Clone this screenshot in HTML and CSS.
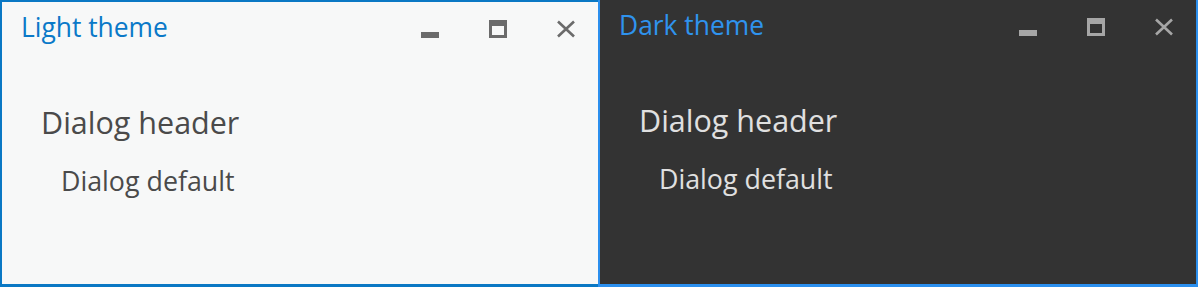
FILE: index.html
```html
<!DOCTYPE html>
<html>
<head>
<meta charset="utf-8">
<link rel="stylesheet" href="styles.css">
</head>
<body>
<div class="stage">
  <section class="panel light">
    <div class="titlebar">
      <div class="title">Light theme</div>
      <div class="controls">
        <svg class="ic ic-min" width="18" height="18" viewBox="0 0 18 18"><rect x="0" y="12" width="18" height="6"/></svg>
        <svg class="ic ic-max" width="18" height="18" viewBox="0 0 18 18"><path fill-rule="evenodd" d="M0 0H18V18H0Z M3 6V15H15V6Z"/></svg>
        <svg class="ic ic-close" width="20" height="18" viewBox="0 0 20 18"><path d="M2 1.5L18 16.5M18 1.5L2 16.5"/></svg>
      </div>
    </div>
    <div class="content">
      <div class="header">Dialog header</div>
      <div class="default">Dialog default</div>
    </div>
  </section>
  <section class="panel dark">
    <div class="titlebar">
      <div class="title">Dark theme</div>
      <div class="controls">
        <svg class="ic ic-min" width="18" height="18" viewBox="0 0 18 18"><rect x="0" y="12" width="18" height="6"/></svg>
        <svg class="ic ic-max" width="18" height="18" viewBox="0 0 18 18"><path fill-rule="evenodd" d="M0 0H18V18H0Z M3 6V15H15V6Z"/></svg>
        <svg class="ic ic-close" width="20" height="18" viewBox="0 0 20 18"><path d="M2 1.5L18 16.5M18 1.5L2 16.5"/></svg>
      </div>
    </div>
    <div class="content">
      <div class="header">Dialog header</div>
      <div class="default">Dialog default</div>
    </div>
  </section>
</div>
</body>
</html>
```
FILE: styles.css
```css
html, body {
  margin: 0;
  padding: 0;
  width: 1198px;
  height: 287px;
  overflow: hidden;
  background: #333333;
}
body {
  font-family: "Open Sans", "Noto Sans", sans-serif;
}
.stage {
  display: flex;
  align-items: flex-start;
}
.panel {
  width: 600px;
  height: 287px;
  box-sizing: border-box;
  border: 2px solid;
  display: flex;
  flex-direction: column;
  flex: none;
}
.light {
  background: #f7f8f8;
  border-color: #0a78c4;
  border-bottom-width: 3px;
}
.dark {
  background: #333333;
  border-color: #2b8fee;
  margin-left: -2px;
  margin-top: -2px;
  height: 289px;
  border-bottom-width: 3px;
}
.titlebar {
  display: flex;
  padding: 9px 22px 0 19px;
}
.title {
  flex: 1;
  font-size: 26.4px;
  line-height: 32px;
}
.light .title { color: #0a79c8; }
.dark .title { color: #2f93ee; }
.controls {
  display: flex;
  gap: 49px;
  margin-top: 9px;
}
.ic-min { margin-right: 1px; }
.light .ic { fill: #6b6b6b; stroke: #6b6b6b; }
.dark .ic { fill: #a6a6a6; stroke: #a6a6a6; }
.ic-min, .ic-max { stroke: none !important; }
.ic-close { fill: none !important; stroke-width: 2.6; }
.content {
  padding: 59px 0 0 39px;
}
.header {
  font-size: 30.5px;
  line-height: 40px;
}
.default {
  margin-top: 23px;
  padding-left: 20px;
  font-size: 26.8px;
  line-height: 32px;
}
.light .header, .light .default { color: #4a4a4a; }
.dark .header, .dark .default { color: #e0e0e0; }
```
